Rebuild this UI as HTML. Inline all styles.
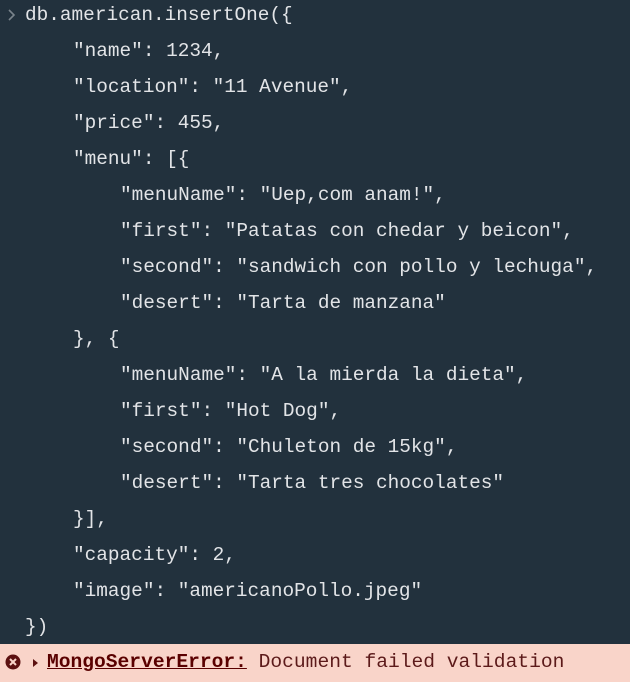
<!DOCTYPE html>
<html><head><style>
html,body{margin:0;padding:0;background:#22313d;width:630px;height:682px;overflow:hidden}
.l{position:absolute;left:0;height:36px;line-height:36px;font-family:"Liberation Mono",monospace;font-size:19.4px;color:#e2e4e7;white-space:pre}
.err{position:absolute;left:0;top:644px;width:630px;height:38px;background:#f9d4c9;}
.et{position:absolute;left:47px;top:0;line-height:36px;font-family:"Liberation Mono",monospace;font-size:19.6px;color:#5c1a1a;white-space:pre}
.et b{text-decoration:underline;color:#5a0000}
</style></head><body>
<svg style="position:absolute;left:6px;top:8px" width="12" height="14"><path d="M3 2 L8 7 L3 12" stroke="#7a848c" stroke-width="1.6" fill="none"/></svg>
<div class="l" style="top:-3px;left:25px">db.american.insertOne({</div>
<div class="l" style="top:33px;left:73px">"name": 1234,</div>
<div class="l" style="top:69px;left:73px">"location": "11 Avenue",</div>
<div class="l" style="top:105px;left:73px">"price": 455,</div>
<div class="l" style="top:141px;left:73px">"menu": [{</div>
<div class="l" style="top:177px;left:120px">"menuName": "Uep,com anam!",</div>
<div class="l" style="top:213px;left:120px">"first": "Patatas con chedar y beicon",</div>
<div class="l" style="top:249px;left:120px">"second": "sandwich con pollo y lechuga",</div>
<div class="l" style="top:285px;left:120px">"desert": "Tarta de manzana"</div>
<div class="l" style="top:321px;left:73px">}, {</div>
<div class="l" style="top:357px;left:120px">"menuName": "A la mierda la dieta",</div>
<div class="l" style="top:393px;left:120px">"first": "Hot Dog",</div>
<div class="l" style="top:429px;left:120px">"second": "Chuleton de 15kg",</div>
<div class="l" style="top:465px;left:120px">"desert": "Tarta tres chocolates"</div>
<div class="l" style="top:501px;left:73px">}],</div>
<div class="l" style="top:537px;left:73px">"capacity": 2,</div>
<div class="l" style="top:573px;left:73px">"image": "americanoPollo.jpeg"</div>
<div class="l" style="top:609px;left:25px">})</div>
<div class="err">
<svg style="position:absolute;left:5px;top:10px" width="16" height="16"><circle cx="8" cy="8" r="7.5" fill="#5c1010"/><path d="M5 5 L11 11 M11 5 L5 11" stroke="#f9d4c9" stroke-width="2"/></svg>
<svg style="position:absolute;left:32px;top:14px" width="8" height="10"><path d="M1 1 L6 5 L1 9Z" fill="#5c1010"/></svg>
<div class="et"><b>MongoServerError:</b> Document failed validation</div>
</div>
</body></html>
